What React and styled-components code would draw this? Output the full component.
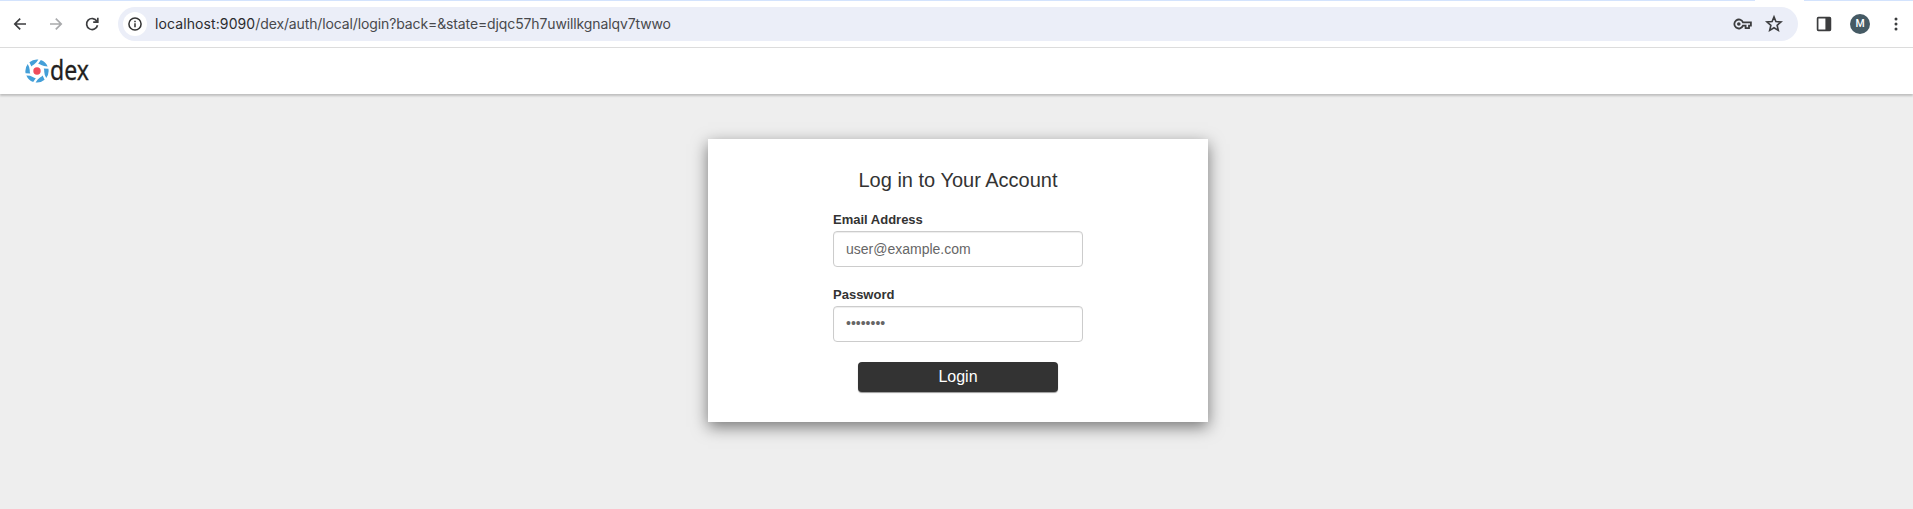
import React from "react";
import styled, { createGlobalStyle } from "styled-components";

const GlobalStyle = createGlobalStyle`
  * { box-sizing: border-box; }
  html, body, #root { height: 100%; }
  body {
    margin: 0;
    overflow: hidden;
    background: #eeeeee;
    color: #333;
    font-family: "Liberation Sans", Arial, sans-serif;
  }
  svg { display: block; flex: none; }
`;

const Page = styled.div`
  display: flex;
  flex-direction: column;
  min-height: 100%;
`;

const TabStrip = styled.div`
  display: flex;
  justify-content: space-between;
  height: 1px;
  background: #fff;
`;

const TabEdge = styled.div`
  width: ${(p) => p.$width}px;
  background: #d3e3fd;
`;

const Toolbar = styled.div`
  display: flex;
  align-items: center;
  height: 47px;
  padding: 0 7px 0 10px;
  background: #fff;
  border-bottom: 1px solid #dcdcdc;
`;

const ToolButton = styled.button`
  display: flex;
  align-items: center;
  justify-content: center;
  width: 20px;
  height: 20px;
  margin: 0 ${(p) => p.$gap || 0}px 0 0;
  padding: 0;
  border: 0;
  background: none;
  color: ${(p) => p.$color || "#3c3d3f"};
`;

const AddressBar = styled.div`
  display: flex;
  align-items: center;
  flex: 1;
  height: 34px;
  margin-right: 16px;
  padding: 0 14px 0 5px;
  border-radius: 17px;
  background: #ebeef8;
`;

const SiteInfo = styled.span`
  display: flex;
  align-items: center;
  justify-content: center;
  width: 24px;
  height: 24px;
  margin-right: 8px;
  border-radius: 50%;
  background: #fff;
`;

const Url = styled.span`
  flex: 1;
  font: 14px/20px Inter, Roboto, sans-serif;
  letter-spacing: -0.12px;
  white-space: nowrap;
  color: #48494c;
`;

const Host = styled.span`
  letter-spacing: 0.1px;
  color: #2b2c2f;
`;

const Avatar = styled.span`
  display: flex;
  align-items: center;
  justify-content: center;
  width: 20px;
  height: 20px;
  margin-right: 16px;
  border-radius: 50%;
  background: #455a64;
  color: #fff;
  font: 500 10.5px/20px Roboto, sans-serif;
`;

const NavBar = styled.header`
  display: flex;
  align-items: center;
  height: 46px;
  padding-left: 25px;
  background: #fff;
  box-shadow: 0 2px 2px rgba(0, 0, 0, 0.2);
`;

const Brand = styled.span`
  height: 46px;
  margin-left: 1px;
  color: #231f20;
  font: 26.5px/44px "Noto Sans", sans-serif;
  transform: scaleX(0.87);
  transform-origin: left center;
  -webkit-text-stroke: 0.3px #231f20;
`;

const Main = styled.main`
  display: flex;
  justify-content: center;
  padding: 45px 0 0 3px;
`;

const Panel = styled.form`
  display: flex;
  flex-direction: column;
  align-items: center;
  width: 500px;
  height: 283px;
  padding: 30px;
  background: #fff;
  box-shadow: 0 5px 15px rgba(0, 0, 0, 0.5);
`;

const Heading = styled.h2`
  margin: 0 0 21px;
  font-size: 20px;
  font-weight: 400;
  line-height: 23px;
`;

const Field = styled.div`
  display: flex;
  flex-direction: column;
  width: 250px;
  margin-bottom: ${(p) => p.$gap}px;
`;

const Label = styled.label`
  margin-bottom: 4px;
  font-size: 13px;
  font-weight: 700;
  line-height: 14px;
`;

const Input = styled.input`
  width: 250px;
  height: 36px;
  padding: 0 12px ${(p) => (p.type === "password" ? 2 : 0)}px;
  border: 1px solid #ccc;
  border-radius: 4px;
  outline: none;
  background: #fff;
  box-shadow: inset 0 1px 1px rgba(0, 0, 0, 0.075);
  color: #666;
  font: 14px "Liberation Sans", Arial, sans-serif;
`;

const SubmitButton = styled.button`
  width: 200px;
  height: 30px;
  padding: 0;
  border: 0;
  border-radius: 4px;
  background: #333;
  box-shadow: 0 1px 1px rgba(0, 0, 0, 0.4);
  color: #fff;
  font: 16px/30px "Liberation Sans", Arial, sans-serif;
`;

const Stroke = ({ size = 20, width = 1.7, children }) => (
  <svg width={size} height={size} viewBox="0 0 20 20" fill="none" stroke="currentColor" strokeWidth={width}>
    {children}
  </svg>
);

const BLADES = [0, 60, 120, 180, 240, 300];

const DexMark = () => (
  <svg width="24" height="24" viewBox="-12 -12 24 24" aria-hidden="true">
    {BLADES.map((angle) => (
      <path
        key={angle}
        transform={`rotate(${angle})`}
        d="M-7.6 -8.8 A11.6 11.6 0 0 1 1.4 -11.5 Q-0.6 -8 -3 -6.6 Q-4.4 -6 -5.6 -4.6 Z"
        fill="#449fd8"
      />
    ))}
    <circle r="3.7" fill="#f04d5c" />
  </svg>
);

export default function App() {
  return (
    <Page>
      <GlobalStyle />
      <TabStrip>
        <TabEdge $width={1755} />
        <TabEdge $width={109} />
      </TabStrip>
      <Toolbar>
        <ToolButton $gap={16} aria-label="Back">
          <Stroke><path d="M16 10H5M10.2 4.6 4.8 10l5.4 5.4" /></Stroke>
        </ToolButton>
        <ToolButton $gap={16} $color="#a9aaac" aria-label="Forward">
          <Stroke><path d="M4 10h11M9.8 4.6 15.2 10l-5.4 5.4" /></Stroke>
        </ToolButton>
        <ToolButton $gap={16} aria-label="Reload">
          <Stroke><path d="M14.9 7.3A5.5 5.5 0 1 0 15.5 11.2M15.8 3.8V8.2H11.2" /></Stroke>
        </ToolButton>
        <AddressBar>
          <SiteInfo>
            <Stroke size={16} width={1.9}>
              <circle cx="10" cy="10" r="7.6" />
              <path d="M10 9.2v5M10 5.8v1.9" />
            </Stroke>
          </SiteInfo>
          <Url>
            <Host>localhost:9090</Host>/dex/auth/local/login?back=&amp;state=djqc57h7uwillkgnalqv7twwo
          </Url>
          <ToolButton $gap={12} aria-label="Passwords">
            <Stroke width={1.8}>
              <path d="M11 8.3A4.5 4.5 0 1 0 11 11.7H13.6V14.2H17V11.7H18.9V8.3Z" />
              <circle cx="6.8" cy="10" r="1.8" fill="currentColor" stroke="none" />
            </Stroke>
          </ToolButton>
          <ToolButton aria-label="Bookmark">
            <Stroke width={1.6}>
              <path d="M10 2.9 11.9 7.6 17 8 13.1 11.3 14.3 16.4 10 13.7 5.7 16.4 6.9 11.3 3 8 8.1 7.6Z" />
            </Stroke>
          </ToolButton>
        </AddressBar>
        <ToolButton $gap={16} aria-label="Side panel">
          <Stroke>
            <rect x="3.6" y="3.6" width="12.8" height="12.8" rx="0.8" />
            <path d="M11.4 3.5H16.5V16.5H11.4Z" fill="currentColor" stroke="none" />
          </Stroke>
        </ToolButton>
        <Avatar>M</Avatar>
        <ToolButton aria-label="Menu">
          <svg width="20" height="20" viewBox="0 0 20 20" fill="currentColor">
            <circle cx="10" cy="4.9" r="1.5" />
            <circle cx="10" cy="10" r="1.5" />
            <circle cx="10" cy="15.1" r="1.5" />
          </svg>
        </ToolButton>
      </Toolbar>
      <NavBar>
        <DexMark />
        <Brand>dex</Brand>
      </NavBar>
      <Main>
        <Panel onSubmit={(e) => e.preventDefault()}>
          <Heading>Log in to Your Account</Heading>
          <Field $gap={21}>
            <Label htmlFor="login">Email Address</Label>
            <Input id="login" type="text" defaultValue="user@example.com" />
          </Field>
          <Field $gap={20}>
            <Label htmlFor="password">Password</Label>
            <Input id="password" type="password" defaultValue="password" />
          </Field>
          <SubmitButton type="submit">Login</SubmitButton>
        </Panel>
      </Main>
    </Page>
  );
}
